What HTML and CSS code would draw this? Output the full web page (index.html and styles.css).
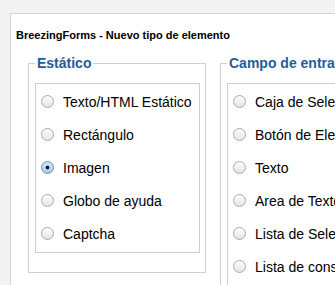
FILE: index.html
```html
<!DOCTYPE html>
<html lang="es">
<head>
<meta charset="utf-8">
<link rel="stylesheet" href="styles.css">
</head>
<body>
<div class="panel">
  <div class="title">BreezingForms - Nuevo tipo de elemento</div>
  <div class="cols">
    <fieldset class="group">
      <legend class="legend">Estático</legend>
      <div class="box">
        <label class="row"><input type="radio" name="t" class="radio"><span>Texto/HTML Estático</span></label>
        <label class="row"><input type="radio" name="t" class="radio"><span>Rectángulo</span></label>
        <label class="row"><input type="radio" name="t" class="radio" checked><span>Imagen</span></label>
        <label class="row"><input type="radio" name="t" class="radio"><span>Globo de ayuda</span></label>
        <label class="row"><input type="radio" name="t" class="radio"><span>Captcha</span></label>
      </div>
    </fieldset>
    <fieldset class="group">
      <legend class="legend">Campo de entrada</legend>
      <div class="box">
        <label class="row"><input type="radio" name="t" class="radio"><span>Caja de Selección</span></label>
        <label class="row"><input type="radio" name="t" class="radio"><span>Botón de Elección</span></label>
        <label class="row"><input type="radio" name="t" class="radio"><span>Texto</span></label>
        <label class="row"><input type="radio" name="t" class="radio"><span>Area de Texto</span></label>
        <label class="row"><input type="radio" name="t" class="radio"><span>Lista de Selección</span></label>
        <label class="row"><input type="radio" name="t" class="radio"><span>Lista de consulta</span></label>
      </div>
    </fieldset>
  </div>
</div>
</body>
</html>
```
FILE: styles.css
```css
html, body {
  margin: 0;
  padding: 0;
  background: #f3f3f3;
  overflow: hidden;
}
body {
  font-family: "Liberation Sans", Arial, sans-serif;
  color: #000;
}
.panel {
  margin: 13px 0 0 10px;
  width: 600px;
  height: 400px;
  background: #fff;
  border: 1px solid #d6d6d6;
  box-sizing: border-box;
  padding: 15px 0 0 5px;
}
.title {
  font-size: 11px;
  font-weight: bold;
  line-height: 13px;
}
.cols {
  display: flex;
  align-items: flex-start;
  gap: 14px;
  margin: 13px 0 0 12px;
}
.group {
  margin: 0;
  width: 178px;
  box-sizing: border-box;
  border: 1px solid #cfcfcf;
  padding: 11px 5px 19px 6px;
  min-width: 0;
}
.legend {
  padding: 0 2px;
  font-size: 14px;
  font-weight: bold;
  color: #1f5e98;
  line-height: 17px;
}
.box {
  border: 1px solid #cfcfcf;
  padding: 1px 0 2px 5px;
}
.row {
  display: flex;
  align-items: center;
  height: 33px;
  font-size: 14px;
  white-space: nowrap;
}
.radio {
  appearance: none;
  -webkit-appearance: none;
  margin: 0 9px 0 0;
  width: 13px;
  height: 13px;
  border-radius: 50%;
  border: 1px solid #aaaaaa;
  box-sizing: border-box;
  background: linear-gradient(#fdfdfd, #e4e4e4);
  flex: none;
}
.radio:checked {
  border-color: #6a8fb8;
  background: radial-gradient(circle at 50% 50%, #1a1a1a 0, #1a1a1a 1.6px, transparent 2.2px), linear-gradient(#d6e6f6, #a9c9ea);
}
```
